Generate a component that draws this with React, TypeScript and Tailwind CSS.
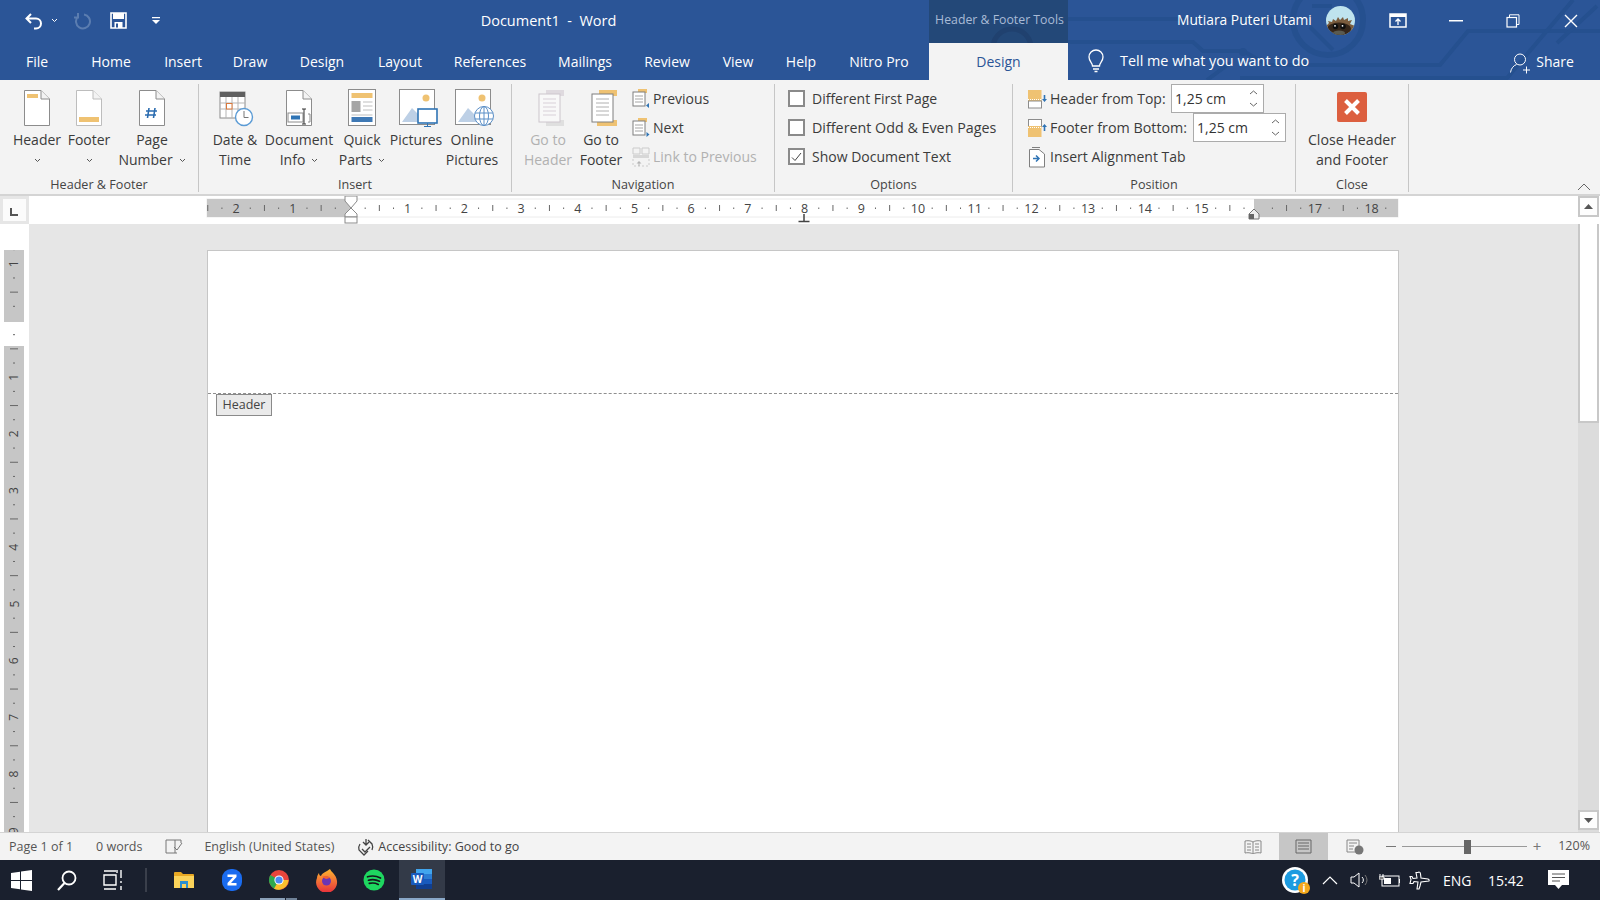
import React from "react";

const font = "font-['Open_Sans',sans-serif]";

function Doc({ children, stroke = "#8c8c8c" }: { children?: React.ReactNode; stroke?: string }) {
  return (
    <svg width="28" height="38" viewBox="0 0 28 38">
      <path d="M1.5 1.5H18L26.5 10V36.5H1.5Z" fill="#fff" stroke={stroke} />
      <path d="M18 1.5V10H26.5" fill="#f3f3f3" stroke={stroke} />
      {children}
    </svg>
  );
}

const HeaderIcon = () => <Doc><rect x="4" y="5" width="11" height="4" fill="#efc272" /></Doc>;
const FooterIcon = () => <Doc stroke="#bdbdbd"><rect x="4" y="28" width="20" height="5" fill="#efc272" /></Doc>;
const PageNumIcon = () => (
  <Doc>
    <path d="M11 19l-1.5 10M17 19l-1.5 10M8 22h11M7 26h11" stroke="#2b6cb0" strokeWidth="1.6" fill="none" />
  </Doc>
);
const DateIcon = () => (
  <svg width="36" height="38" viewBox="0 0 36 38" className="ml-[3px]">
    <rect x="1" y="3" width="25" height="26" fill="#fff" stroke="#8c8c8c" />
    <rect x="1" y="3" width="25" height="5" fill="#5f5f5f" />
    <path d="M1 14h25M1 20h25M7 8v21M13 8v21M19 8v21" stroke="#b5b5b5" />
    <rect x="7.5" y="14.5" width="5.5" height="5.5" fill="#fff" stroke="#d9783b" />
    <circle cx="25" cy="28" r="8.5" fill="#fff" stroke="#5b9bd5" strokeWidth="1.4" />
    <path d="M25 22v6.5h4.5" fill="none" stroke="#777" />
  </svg>
);
const DocInfoIcon = () => (
  <Doc>
    <rect x="3" y="24" width="15" height="9" fill="#fff" stroke="#8c8c8c" />
    <rect x="6" y="26.5" width="9" height="4" fill="#2f74b5" />
    <path d="M19 20v15M17 20h4M17 35h4" stroke="#333" fill="none" />
    <path d="M23 25h2v8h-2" stroke="#8c8c8c" fill="none" />
  </Doc>
);
const QuickIcon = () => (
  <svg width="28" height="38" viewBox="0 0 28 38">
    <rect x=".5" y=".5" width="27" height="36" fill="#fff" stroke="#8c8c8c" />
    <rect x="3.5" y="4" width="21" height="5" fill="#efc272" />
    <rect x="3.5" y="12" width="9" height="11" fill="#a6a6a6" />
    <path d="M15 13h9.5M15 17h9.5M15 21h9.5M3.5 26h21" stroke="#bfbfbf" />
    <rect x="3.5" y="28" width="21" height="5" fill="#3f79b5" />
  </svg>
);
const PicBase = () => (
  <>
    <rect x=".5" y=".5" width="35" height="35" fill="#fff" stroke="#8c8c8c" />
    <circle cx="27" cy="9" r="3.5" fill="#efc272" />
    <path d="M3 33l10-14 8 8 3-2v8Z" fill="#bdd0e6" />
  </>
);
const PicturesIcon = () => (
  <svg width="40" height="38" viewBox="0 0 40 38" className="ml-[5px]">
    <PicBase />
    <rect x="19" y="20" width="19" height="14" fill="#fff" stroke="#2f74b5" strokeWidth="1.6" />
    <path d="M28.5 34v3M25 37.5h7" stroke="#2f74b5" />
  </svg>
);
const OnlineIcon = () => (
  <svg width="40" height="38" viewBox="0 0 40 38" className="ml-[5px]">
    <PicBase />
    <circle cx="29" cy="27" r="9.5" fill="#fff" stroke="#5b8fc7" />
    <ellipse cx="29" cy="27" rx="4.5" ry="9.5" fill="none" stroke="#5b8fc7" />
    <path d="M20 24h18M20 30h18M29 17.500v19" stroke="#5b8fc7" />
  </svg>
);
const GoHeaderIcon = () => (
  <svg width="30" height="38" viewBox="0 0 30 38" opacity=".45" className="ml-[8px]">
    <rect x="9" y="1" width="18" height="6" fill="#c9bcc9" />
    <rect x="9" y="31" width="18" height="6" fill="#c9c9c9" />
    <rect x="2" y="5" width="21" height="28" fill="#fff" stroke="#a08fa0" />
    <path d="M6 10h13M6 14h13M6 18h13M6 22h13M6 26h13" stroke="#b9a9b9" />
  </svg>
);
const GoFooterIcon = () => (
  <svg width="30" height="38" viewBox="0 0 30 38" className="ml-[8px]">
    <rect x="9" y="1" width="18" height="6" fill="#efc272" />
    <rect x="7" y="31" width="20" height="6" fill="#efc272" />
    <rect x="2" y="5" width="21" height="28" fill="#fff" stroke="#7f7f7f" />
    <path d="M6 10h13M6 14h13M6 18h13M6 22h13M6 26h13" stroke="#b0b0b0" />
  </svg>
);
const SmallDoc = ({ dir }: { dir: "l" | "r" }) => (
  <svg width="18" height="20" viewBox="0 0 18 20">
    <rect x="6" y="0" width="9" height="4" fill="#efc272" />
    <rect x="1" y="3" width="12" height="14" fill="#fff" stroke="#7f7f7f" />
    <path d="M3 7h8M3 10h8M3 13h8" stroke="#a5a5a5" />
    {dir === "l" ? <path d="M17 14v5l-3-2.500Z" fill="#2f74b5" /> : <path d="M14.500 14v5l3-2.500Z" fill="#2f74b5" />}
  </svg>
);
const LinkIcon = () => (
  <svg width="18" height="20" viewBox="0 0 18 20" opacity=".5">
    <path d="M1 1h7v6H1ZM10 1h7v6h-7Z" fill="none" stroke="#a5a5a5" />
    <rect x="1" y="8" width="16" height="3" fill="#bcbcbc" />
    <path d="M1 12v7h16v-7" fill="none" stroke="#a5a5a5" strokeDasharray="2 2" />
    <path d="M7 14l-2.500 2.500h2V19h1v-2.500h2Z" fill="#777" />
  </svg>
);
const HdrDist = ({ up }: { up?: boolean }) => (
  <svg width="20" height="20" viewBox="0 0 20 20">
    {up ? (
      <>
        <rect x=".5" y="1.500" width="13" height="7" fill="#fff" stroke="#8c8c8c" />
        <rect x="0" y="8" width="13.500" height="11" fill="#efc272" />
        <path d="M0 9.500h13.500" stroke="#fff" strokeDasharray="1 1" />
        <path d="M16.500 6l-2.500 3h1.700v4h1.600V9h1.700Z" fill="#2f74b5" />
      </>
    ) : (
      <>
        <rect x="0" y="1" width="13.500" height="11" fill="#efc272" />
        <rect x=".5" y="12" width="13" height="7" fill="#fff" stroke="#8c8c8c" />
        <path d="M0 10.500h13.500" stroke="#fff" strokeDasharray="1 1" />
        <path d="M16.500 13l-2.500-3h1.700V6h1.600v4h1.700Z" fill="#2f74b5" />
      </>
    )}
  </svg>
);
const AlignIcon = () => (
  <svg width="18" height="22" viewBox="0 0 18 22">
    <path d="M1.500 3.500H11L16.500 8V21H1.500Z" fill="#fff" stroke="#7f7f7f" />
    <path d="M4 1.500H12" stroke="#7f7f7f" />
    <path d="M5 12.500h5M8 9.500l3 3-3 3" stroke="#2f74b5" strokeWidth="1.500" fill="none" />
  </svg>
);
const Caret = () => (
  <svg width="7" height="5" viewBox="0 0 7 5" className="inline-block"><path d="M1 1l2.500 2.500L6 1" fill="none" stroke="#555" /></svg>
);

function Big({ w, icon, lines, disabled, caret }: { w: string; icon: React.ReactNode; lines: string[]; disabled?: boolean; caret?: "below" | "inline" }) {
  return (
    <div className={`${w} flex flex-col items-center shrink-0`}>
      <div className="h-[38px] mt-[5px] flex items-center justify-center">{icon}</div>
      <div className={`mt-[3px] flex flex-col items-center text-[14px] leading-[20px] whitespace-nowrap ${disabled ? "text-[#b1b1b1]" : "text-[#3b3b3b]"}`}>
        {lines.map((l, i) => (
          <div key={i} className="flex items-center gap-[6px]">
            <span>{l}</span>
            {caret === "inline" && i === lines.length - 1 && <Caret />}
          </div>
        ))}
        {caret === "below" && <div className="h-[20px] flex items-center"><Caret /></div>}
      </div>
    </div>
  );
}

function Group({ cls, label, children }: { cls: string; label: string; children: React.ReactNode }) {
  return (
    <div className={`${cls} h-[108px] flex flex-col border-r border-[#c6c6c6] shrink-0`}>
      <div className="flex-1 flex">{children}</div>
      <div className="text-center text-[12.600px] leading-[14px] text-[#444] whitespace-nowrap">{label}</div>
    </div>
  );
}

const Row = ({ children, cls = "" }: { children: React.ReactNode; cls?: string }) => (
  <div className={`h-[29px] flex items-center whitespace-nowrap text-[14px] text-[#3b3b3b] ${cls}`}>{children}</div>
);

const Check = ({ on }: { on?: boolean }) => (
  <span className="w-[17px] h-[17px] bg-white border-2 border-[#8a8a8a] flex items-center justify-center shrink-0">
    {on && (
      <svg width="11" height="10" viewBox="0 0 11 10"><path d="M1 5.500l3 3 6-7.500" fill="none" stroke="#444" /></svg>
    )}
  </span>
);

function Spin({ cls }: { cls: string }) {
  return (
    <div className={`${cls} h-[29px] bg-white border border-[#ababab] flex items-center justify-between pl-[3px] pr-[5px] text-[14px] text-[#333]`}>
      <span>1,25 cm</span>
      <span className="flex flex-col gap-[7px]">
        <svg width="9" height="5" viewBox="0 0 9 5"><path d="M1 4l3.500-3L8 4" fill="none" stroke="#666" /></svg>
        <svg width="9" height="5" viewBox="0 0 9 5"><path d="M1 1l3.500 3L8 1" fill="none" stroke="#666" /></svg>
      </span>
    </div>
  );
}

function HRuler() {
  const cm = 56.7;
  const zero = 144;
  const ticks: React.ReactNode[] = [];
  for (let q = -10; q <= 73; q++) {
    const x = zero + (q * cm) / 4 - (q < 0 ? 1.5 : 0);
    if (q % 4 === 0) {
      const n = Math.abs(q / 4);
      if (n === 0 || n === 16) continue;
      ticks.push(
        <text key={q} x={x} y="14" textAnchor="middle" fontSize="12.500" fill="#444" fontFamily="'Open Sans',sans-serif">{n}</text>
      );
    } else if (q % 2 === 0) {
      ticks.push(<path key={q} d={`M${x} 6v6`} stroke="#666" />);
    } else {
      ticks.push(<path key={q} d={`M${x} 8.500v1.500`} stroke="#666" />);
    }
  }
  return (
    <svg width="1191" height="25" viewBox="0 0 1191 25" className="overflow-visible">
      <rect x="0" y="0" width="1191" height="18" fill="#fff" stroke="#ececec" />
      <rect x="0" y="0" width="144" height="18" fill="#c6c6c6" />
      <rect x="1047" y="0" width="144" height="18" fill="#c6c6c6" />
      {ticks}
      <path d="M138 -3h12v5l-6 7-6-7Z" fill="#fff" stroke="#8a8a8a" />
      <path d="M144 9l6 6v3h-12v-3Z" fill="#fff" stroke="#8a8a8a" />
      <rect x="138" y="18" width="12" height="6" fill="#fff" stroke="#8a8a8a" />
      <path d="M1047 10l5 5v5h-10v-5Z" fill="#eee" stroke="#777" />
      <path d="M1042 15h5v5h-5Z" fill="#666" />
      <path d="M597 15v7M591.500 22.500h11" stroke="#444" strokeWidth="1.500" />
    </svg>
  );
}

function VRuler() {
  const cm = 56.7;
  const zero = 70.5;
  const items: React.ReactNode[] = [];
  for (let q = -5; q <= 40; q++) {
    const y = zero + (q * cm) / 4;
    if (q === 0) continue;
    if (q % 4 === 0) {
      const n = Math.abs(q / 4);
      items.push(
        <text key={q} x="10" y={y} textAnchor="middle" dominantBaseline="central" fontSize="12" fill="#444" fontFamily="'Open Sans',sans-serif" transform={`rotate(-90 10 ${y})`}>{n}</text>
      );
    } else if (q % 2 === 0) {
      items.push(<path key={q} d={`M6 ${y}h8`} stroke="#666" />);
    } else {
      items.push(<path key={q} d={`M9 ${y}h2`} stroke="#666" />);
    }
  }
  return (
    <svg width="20" height="582" viewBox="0 0 20 582">
      <rect width="20" height="582" fill="#c6c6c6" />
      <rect y="72" width="20" height="24" fill="#fff" />
      {items}
    </svg>
  );
}

const Avatar = () => (
  <svg width="29" height="29" viewBox="0 0 29 29">
    <defs><clipPath id="av"><circle cx="14.500" cy="14.500" r="14.500" /></clipPath></defs>
    <g clipPath="url(#av)">
      <rect width="29" height="29" fill="#bfe3ee" />
      <path d="M0 20l3-3-1-2 4 1 1-3 3 2 2-4 2 3 3-3 1 3 4-2 0 3 4-1-2 4 5 2v14H0Z" fill="#7a5c3e" />
      <ellipse cx="13" cy="23" rx="12" ry="6.500" fill="#35261a" />
      <circle cx="9.500" cy="20.500" r="2.700" fill="#0d0d0d" />
      <circle cx="17" cy="20.500" r="2.700" fill="#0d0d0d" />
      <circle cx="9" cy="19.800" r=".9" fill="#fff" />
      <circle cx="16.500" cy="19.800" r=".9" fill="#fff" />
      <ellipse cx="13" cy="27" rx="6" ry="2.500" fill="#5a5a50" />
    </g>
  </svg>
);

function Circuit() {
  return (
    <svg className="absolute left-0 top-0 pointer-events-none" width="1600" height="80" viewBox="0 0 1600 80" fill="none" stroke="#25508f" strokeWidth="4">
      <circle cx="1328" cy="20" r="35" strokeWidth="6" />
      <path d="M1310 27l23 23M1312 6h20" />
      <path d="M1068 19H1293" />
      <path d="M1068 42H1193l10 9H1243l25 14H1440l28-34H1600" />
      <path d="M1230 63l-23 17" />
      <path d="M1240 78H1507L1573 0M1557 43l40-37" />
      <circle cx="1243" cy="52" r="4" fill="#25508f" stroke="none" />
    </svg>
  );
}

const ZoomApp = () => (
  <svg width="22" height="24" viewBox="0 0 22 24">
    <rect x="1" y="1" width="20" height="22" rx="9" fill="#1a6cf0" />
    <path d="M6.500 6.500h9v2.500l-5.500 6h5.500v2.500h-9V15l5.500-6h-5.500Z" fill="#fff" />
  </svg>
);
const Chrome = () => (
  <svg width="22" height="22" viewBox="0 0 22 22">
    <circle cx="11" cy="11" r="10" fill="#e8453c" />
    <path d="M11 11L2.300 6A10 10 0 0 0 6 19.700L11 21Z" fill="#2da94f" />
    <path d="M11 11h9.500A10 10 0 0 1 6 19.700Z" fill="#fbc02d" />
    <circle cx="11" cy="11" r="4.600" fill="#fff" />
    <circle cx="11" cy="11" r="3.600" fill="#4a8af4" />
  </svg>
);
const Firefox = () => (
  <svg width="22" height="24" viewBox="0 0 22 24">
    <defs>
      <linearGradient id="ff" x1="0" y1="0" x2="0" y2="1"><stop offset="0" stopColor="#fdb62f" /><stop offset="1" stopColor="#e8303c" /></linearGradient>
    </defs>
    <path d="M14 1c1 3 6 5 7 12a10.500 10.500 0 1 1-20-3c0-2 1-4 2-5 0 2 1 3 2 3 1-3 5-4 9-7Z" fill="url(#ff)" />
    <circle cx="10.500" cy="13" r="4.500" fill="#6b35b5" />
    <path d="M6 9c3-2 6-1 8 1l-4 1Z" fill="#f4622c" />
  </svg>
);
const Spotify = () => (
  <svg width="22" height="22" viewBox="0 0 22 22">
    <circle cx="11" cy="11" r="10.500" fill="#1ed760" />
    <path d="M4.500 7.800c4-1.200 9-.9 13 1.200M5.500 11.200c3.500-1 7.500-.7 11 1M6.300 14.400c3-.7 6-.5 9 1" stroke="#14161c" strokeWidth="1.700" fill="none" strokeLinecap="round" />
  </svg>
);
const WordIcon = () => (
  <svg width="24" height="22" viewBox="0 0 24 22">
    <rect x="6" y="1" width="16" height="5" fill="#41a5ee" />
    <rect x="6" y="6" width="16" height="5" fill="#2b7cd3" />
    <rect x="6" y="11" width="16" height="5" fill="#185abd" />
    <rect x="6" y="16" width="16" height="5" fill="#103f91" />
    <rect x="1" y="5" width="13" height="12" rx="1" fill="#185abd" />
    <text x="7.500" y="15" textAnchor="middle" fontSize="10" fontWeight="700" fill="#fff" fontFamily="'Open Sans',sans-serif">W</text>
  </svg>
);

export default function App() {
  return (
    <div className={`w-[1600px] h-[900px] flex flex-col overflow-hidden bg-white ${font}`}>
      {/* Top blue */}
      <div className="relative h-[80px] bg-[#2b5597] shrink-0 text-white">
        <Circuit />
        <div className="absolute left-[929px] top-0 w-[139px] h-[43px] bg-[#234878] overflow-hidden">
          <svg width="139" height="43" viewBox="0 0 139 43" fill="none" stroke="#20416f" strokeWidth="5"><circle cx="83" cy="48" r="19" /></svg>
        </div>
        <div className="relative h-[43px] pb-[2px] flex items-center">
          <div className="w-[24px]" />
          <svg width="20" height="18" viewBox="0 0 20 18"><path d="M7 2L2.500 6.500 7 11M3 6.500h9a5 5 0 0 1 0 10h-2" fill="none" stroke="#fff" strokeWidth="2" /></svg>
          <div className="ml-[7px]"><svg width="7" height="5" viewBox="0 0 7 5"><path d="M1 1l2.500 2.500L6 1" fill="none" stroke="#fff" /></svg></div>
          <div className="ml-[15px]"><svg width="18" height="18" viewBox="0 0 18 18"><path d="M11 2.500A7 7 0 1 1 5 4.500M5 1v4.500H1" fill="none" stroke="#5b7db0" strokeWidth="2" /></svg></div>
          <div className="ml-[19px]"><svg width="17" height="17" viewBox="0 0 17 17"><path d="M1 1h15v15H1Z" fill="none" stroke="#fff" strokeWidth="1.600" /><rect x="3" y="1" width="11" height="6" fill="#fff" /><rect x="4.500" y="10" width="8" height="6" fill="#fff" /><rect x="6" y="11.500" width="2" height="4" fill="#2b5597" /></svg></div>
          <div className="ml-[25px]"><svg width="8" height="7" viewBox="0 0 8 7"><path d="M0 0h8v1.300H0ZM0 3h8L4 7Z" fill="#fff" /></svg></div>
          <div className="w-[324px]" />
          <div className="w-[163px] text-center text-[14.500px] whitespace-pre ml-[-17px]">Document1  -  Word</div>
          <div className="w-[300px]" />
          <div className="w-[139px] text-center text-[12.300px] text-[#a9bbd6] whitespace-nowrap shrink-0">Header &amp; Footer Tools</div>
          <div className="w-[108px]" />
          <div className="w-[136px] text-[13.800px] whitespace-nowrap">Mutiara Puteri Utami</div>
          <div className="ml-[13px]"><Avatar /></div>
          <div className="ml-[34px]"><svg width="18" height="15" viewBox="0 0 18 15"><rect x="1" y="1" width="16" height="13" fill="none" stroke="#fff" strokeWidth="1.500" /><rect x="1" y="1" width="16" height="3" fill="#fff" /><path d="M9 12V6M6.500 8.500L9 6l2.500 2.500" stroke="#fff" fill="none" strokeWidth="1.300" /></svg></div>
          <div className="ml-[42px]"><svg width="14" height="2" viewBox="0 0 14 2"><rect width="14" height="1.500" fill="#fff" /></svg></div>
          <div className="ml-[43px]"><svg width="14" height="14" viewBox="0 0 14 14"><path d="M3.500 3V.8H13V10.500H10.500" fill="none" stroke="#fff" /><rect x="1" y="3.500" width="9.500" height="9.500" fill="none" stroke="#fff" strokeWidth="1.200" /></svg></div>
          <div className="ml-[44px]"><svg width="14" height="14" viewBox="0 0 14 14"><path d="M1 1l12 12M13 1L1 13" stroke="#fff" strokeWidth="1.400" /></svg></div>
        </div>
        <div className="relative h-[37px] flex text-[14px] whitespace-nowrap">
          <div className="w-[74px] flex items-center justify-center">File</div>
          <div className="w-[74px] flex items-center justify-center">Home</div>
          <div className="w-[70px] flex items-center justify-center">Insert</div>
          <div className="w-[64px] flex items-center justify-center">Draw</div>
          <div className="w-[80px] flex items-center justify-center">Design</div>
          <div className="w-[76px] flex items-center justify-center">Layout</div>
          <div className="w-[104px] flex items-center justify-center">References</div>
          <div className="w-[86px] flex items-center justify-center">Mailings</div>
          <div className="w-[78px] flex items-center justify-center">Review</div>
          <div className="w-[64px] flex items-center justify-center">View</div>
          <div className="w-[62px] flex items-center justify-center">Help</div>
          <div className="w-[94px] flex items-center justify-center">Nitro Pro</div>
          <div className="ml-[3px] w-[139px] bg-[#f3f3f3] text-[#2b5597] flex items-center justify-center">Design</div>
          <div className="ml-[18px] flex items-center pb-[2px]">
            <svg width="20" height="24" viewBox="0 0 20 24"><path d="M6.500 17c0-3-3.500-4.500-3.500-9a7 7 0 0 1 14 0c0 4.500-3.500 6-3.500 9ZM7 20h6M8.500 22.500h3" fill="none" stroke="#fff" strokeWidth="1.300" /></svg>
            <span className="ml-[14px] text-[14.400px]">Tell me what you want to do</span>
          </div>
          <div className="ml-[200px] flex items-center">
            <svg width="22" height="22" viewBox="0 0 22 22" className="mt-[3px]"><circle cx="11" cy="7.500" r="5.500" fill="none" stroke="#fff" /><path d="M1.500 20.500c.5-4 3-7 6-8M14 18h7M17.500 14.500v7" fill="none" stroke="#fff" /></svg>
            <span className="ml-[5px]">Share</span>
          </div>
        </div>
      </div>

      {/* Ribbon */}
      <div className="relative h-[116px] bg-[#f3f3f3] border-b-2 border-[#d4d4d4] shrink-0 flex items-start pt-[4px]">
        <Group cls="w-[199px]" label="Header & Footer">
          <div className="w-[7px]" />
          <Big w="w-[60px]" icon={<HeaderIcon />} lines={["Header"]} caret="below" />
          <Big w="w-[44px]" icon={<FooterIcon />} lines={["Footer"]} caret="below" />
          <div className="w-[5px]" />
          <Big w="w-[72px]" icon={<PageNumIcon />} lines={["Page", "Number"]} caret="inline" />
        </Group>
        <Group cls="w-[313px]" label="Insert">
          <div className="w-[7px]" />
          <Big w="w-[58px]" icon={<DateIcon />} lines={["Date &", "Time"]} />
          <Big w="w-[70px]" icon={<DocInfoIcon />} lines={["Document", "Info"]} caret="inline" />
          <Big w="w-[56px]" icon={<QuickIcon />} lines={["Quick", "Parts"]} caret="inline" />
          <Big w="w-[52px]" icon={<PicturesIcon />} lines={["Pictures"]} />
          <Big w="w-[60px]" icon={<OnlineIcon />} lines={["Online", "Pictures"]} />
        </Group>
        <Group cls="w-[263px]" label="Navigation">
          <div className="w-[10px]" />
          <Big w="w-[52px]" icon={<GoHeaderIcon />} lines={["Go to", "Header"]} disabled />
          <Big w="w-[54px]" icon={<GoFooterIcon />} lines={["Go to", "Footer"]} />
          <div className="ml-[4px] flex flex-col">
            <Row><span className="w-[21px]"><SmallDoc dir="l" /></span>Previous</Row>
            <Row><span className="w-[21px]"><SmallDoc dir="r" /></span>Next</Row>
            <Row cls="text-[#b1b1b1]"><span className="w-[21px]"><LinkIcon /></span>Link to Previous</Row>
          </div>
        </Group>
        <Group cls="w-[238px]" label="Options">
          <div className="ml-[13px] flex flex-col">
            <Row><Check /><span className="ml-[7px]">Different First Page</span></Row>
            <Row><Check /><span className="ml-[7px] text-[14.300px]">Different Odd &amp; Even Pages</span></Row>
            <Row><Check on /><span className="ml-[7px]">Show Document Text</span></Row>
          </div>
        </Group>
        <Group cls="w-[283px]" label="Position">
          <div className="ml-[15px] flex flex-col">
            <Row><span className="w-[22px]"><HdrDist /></span><span className="w-[121px]">Header from Top:</span><Spin cls="w-[93px]" /></Row>
            <Row><span className="w-[22px]"><HdrDist up /></span><span className="w-[143px] text-[14.300px]">Footer from Bottom:</span><Spin cls="w-[93px]" /></Row>
            <Row><span className="w-[22px]"><AlignIcon /></span>Insert Alignment Tab</Row>
          </div>
        </Group>
        <Group cls="w-[113px]" label="Close">
          <div className="w-full flex flex-col items-center">
            <div className="mt-[8px] w-[30px] h-[30px] rounded-[2px] bg-[#dc5f3f] flex items-center justify-center">
              <svg width="18" height="18" viewBox="0 0 18 18"><path d="M2.500 2.500l13 13M15.500 2.500l-13 13" stroke="#fff" strokeWidth="4" /></svg>
            </div>
            <div className="mt-[8px] text-center text-[14.200px] leading-[20px] text-[#3b3b3b] whitespace-nowrap">Close Header<br />and Footer</div>
          </div>
        </Group>
        <svg className="absolute left-[1577px] top-[103px]" width="14" height="8" viewBox="0 0 14 8"><path d="M1 7l6-6 6 6" fill="none" stroke="#666" /></svg>
      </div>

      {/* Ruler row */}
      <div className="h-[28px] bg-white shrink-0 flex">
        <div className="w-[29px] h-[28px] bg-[#e6e6e6] p-[3px] shrink-0">
          <div className="w-full h-full bg-[#fbfbfb] flex items-center justify-center pt-[4px] pr-[2px]">
            <svg width="8" height="8" viewBox="0 0 8 8"><path d="M1 0v7h7" fill="none" stroke="#555" strokeWidth="2" /></svg>
          </div>
        </div>
        <div className="ml-[178px] mt-[3px]"><HRuler /></div>
        <div className="ml-[180px] w-[21px] h-[21px] bg-[#fdfdfd] border-2 border-[#c8c8c8] flex items-center justify-center">
          <svg width="9" height="5" viewBox="0 0 9 5"><path d="M4.500 0L9 5H0Z" fill="#555" /></svg>
        </div>
      </div>

      {/* Document area */}
      <div className="flex-1 min-h-0 flex overflow-hidden">
        <div className="w-[29px] bg-white shrink-0 pl-[4px] pt-[26px]">
          <VRuler />
        </div>
        <div className="flex-1 bg-[#e6e6e6] pl-[178px] pt-[26px] overflow-hidden">
          <div className="relative w-[1192px] h-[700px] bg-white border-l border-t border-r border-[#c6c6c6]">
            <div className="mt-[142px] border-t border-dashed border-[#8f8f8f]" />
            <div className="ml-[8px] w-[56px] h-[22px] bg-[#eaeaea] border border-[#8a8a8a] text-[12.500px] text-[#444] flex items-center justify-center">Header</div>
          </div>
        </div>
        <div className="w-[22px] bg-white shrink-0">
          <div className="w-[21px] h-full bg-[#dcdcdc] flex flex-col">
            <div className="w-[21px] h-[199px] bg-white border-2 border-t-0 border-[#c8c8c8]" />
            <div className="flex-1" />
            <div className="mb-[2px] w-[21px] h-[20px] bg-[#fdfdfd] border-2 border-[#c8c8c8] flex items-center justify-center">
              <svg width="9" height="5" viewBox="0 0 9 5"><path d="M4.500 5L9 0H0Z" fill="#555" /></svg>
            </div>
          </div>
        </div>
      </div>

      {/* Status bar */}
      <div className="h-[28px] bg-[#f3f3f3] border-t border-[#d4d4d4] shrink-0 flex items-stretch text-[12.500px] text-[#555] whitespace-nowrap">
        <div className="ml-[9px] self-center mt-[2px]">Page 1 of 1</div>
        <div className="ml-[23px] self-center mt-[2px]">0 words</div>
        <div className="ml-[23px] self-center">
          <svg width="18" height="16" viewBox="0 0 18 16"><path d="M1 1h9v13H1ZM10 1h6v3M10 14h2" fill="none" stroke="#777" /><path d="M9 8l3 3 5-7" fill="none" stroke="#777" /></svg>
        </div>
        <div className="ml-[21px] self-center mt-[2px]">English (United States)</div>
        <div className="ml-[23px] self-center">
          <svg width="18" height="18" viewBox="0 0 18 18"><path d="M3 6A7 7 0 0 0 2 12l5 5 4-4M15 12a7 7 0 0 0 0-6L11 2" fill="none" stroke="#444" strokeWidth="1.300" /><path d="M9 1v5M6 4l3 3 3-3M5 11l3 3 5-5" fill="none" stroke="#444" strokeWidth="1.300" /></svg>
        </div>
        <div className="ml-[3px] self-center mt-[2px] text-[#444]">Accessibility: Good to go</div>
        <div className="flex-1" />
        <div className="self-center mr-[17px]">
          <svg width="18" height="14" viewBox="0 0 18 14"><path d="M9 2C7 .5 3 .5 1 1v12c2-.5 6-.5 8 1 2-1.500 6-1.500 8-1V1c-2-.5-6-.5-8 1ZM9 2v12M3 4h4M3 7h4M3 10h4M11 4h4M11 7h4M11 10h4" fill="none" stroke="#888" /></svg>
        </div>
        <div className="w-[49px] bg-[#c6c6c6] flex items-center justify-center">
          <svg width="17" height="15" viewBox="0 0 17 15"><path d="M1 1h15v13H1ZM3 4h11M3 7h11M3 10h11" fill="none" stroke="#666" /></svg>
        </div>
        <div className="self-center ml-[18px]">
          <svg width="18" height="16" viewBox="0 0 18 16"><path d="M1 1h12v12H1ZM3 4h8M3 7h5M3 10h4" fill="none" stroke="#888" /><circle cx="13" cy="11" r="4.500" fill="#777" /></svg>
        </div>
        <div className="self-center ml-[22px] w-[10px] h-px bg-[#777]" />
        <div className="self-center ml-[6px] w-[125px] h-px bg-[#999] flex items-center">
          <div className="ml-[62px] w-[7px] h-[14px] bg-[#666]" />
        </div>
        <div className="self-center ml-[6px] text-[15px] leading-none text-[#777]">+</div>
        <div className="self-center ml-[17px]">120%</div>
        <div className="w-[10px]" />
      </div>

      {/* Taskbar */}
      <div className="h-[40px] bg-[#1a202e] shrink-0 flex items-center text-white">
        <div className="ml-[11px]">
          <svg width="21" height="21" viewBox="0 0 21 21"><path d="M0 3l9-1.300V10H0ZM10 1.500L21 0v10H10ZM0 11h9v8.300L0 18ZM10 11h11v10l-11-1.500Z" fill="#fff" /></svg>
        </div>
        <div className="ml-[25px]">
          <svg width="20" height="21" viewBox="0 0 20 21"><circle cx="12" cy="8" r="6.500" fill="none" stroke="#fff" strokeWidth="1.800" /><path d="M7.500 13L1 20" stroke="#fff" strokeWidth="2.200" /></svg>
        </div>
        <div className="ml-[26px]">
          <svg width="20" height="20" viewBox="0 0 20 20"><path d="M1 1h12M1 19h12M14 0v3M1 5h12v10H1ZM18 0v8M18 11v2M18 16v4" fill="none" stroke="#fff" strokeWidth="1.400" /></svg>
        </div>
        <div className="ml-[22px] w-[2px] h-[24px] bg-[#3a3f4b]" />
        <div className="ml-[26px]">
          <svg width="22" height="20" viewBox="0 0 22 20"><path d="M1 3a1 1 0 0 1 1-1h6l2 2h10a1 1 0 0 1 1 1v2H1Z" fill="#e8a823" /><rect x="1" y="6" width="20" height="12" fill="#fbd35a" /><rect x="7" y="11" width="8" height="7" fill="#2a8fd0" /><rect x="9" y="14" width="4" height="4" fill="#fbd35a" /></svg>
        </div>
        <div className="ml-[26px]"><ZoomApp /></div>
        <div className="ml-[17px] relative h-[40px] w-[37px] flex items-center justify-center">
          <Chrome />
          <div className="absolute bottom-0 left-0 w-[25px] h-[2px] bg-[#8aa0b8]" />
          <div className="absolute bottom-0 left-[26px] w-[11px] h-[2px] bg-[#6f8298]" />
        </div>
        <div className="ml-[19px]"><Firefox /></div>
        <div className="ml-[25px]"><Spotify /></div>
        <div className="ml-[14px] w-[46px] h-[40px] bg-[#333a48] border-b-2 border-[#8aa8c8] flex items-center justify-center"><WordIcon /></div>
        <div className="flex-1" />
        <div className="relative">
          <svg width="30" height="30" viewBox="0 0 30 30">
            <circle cx="14" cy="15" r="13" fill="#fff" />
            <circle cx="14" cy="15" r="10.500" fill="#1d9be0" />
            <text x="14" y="21" textAnchor="middle" fontSize="16" fontWeight="700" fill="#fff" fontFamily="'Open Sans',sans-serif">?</text>
            <circle cx="23" cy="23" r="6" fill="#f5a81c" />
            <text x="23" y="27" textAnchor="middle" fontSize="10" fontWeight="700" fill="#fff" fontFamily="'Open Sans',sans-serif">i</text>
          </svg>
        </div>
        <div className="ml-[11px]"><svg width="16" height="9" viewBox="0 0 16 9"><path d="M1 8l7-7 7 7" fill="none" stroke="#fff" strokeWidth="1.200" /></svg></div>
        <div className="ml-[12px]"><svg width="20" height="16" viewBox="0 0 20 16"><path d="M1 5h3l5-4v14l-5-4H1Z" fill="none" stroke="#fff" /><path d="M12 5a4 4 0 0 1 0 6" fill="none" stroke="#fff" /><path d="M15 3a8 8 0 0 1 0 10" fill="none" stroke="#777" /></svg></div>
        <div className="ml-[9px]"><svg width="22" height="14" viewBox="0 0 22 14"><rect x="3" y="3" width="17" height="10" fill="none" stroke="#fff" /><rect x="5" y="5" width="7" height="6" fill="#fff" /><path d="M20.500 6v4" stroke="#fff" /><path d="M1 1v3M4 1v3M0 4h5v2H0Z" stroke="#fff" /></svg></div>
        <div className="ml-[8px]"><svg width="21" height="19" viewBox="0 0 21 19"><path d="M10 1c1 0 1.500 1 1.500 2l.5 4 7 1c1 .5 1.500 1 1 2l-8 1-1 4-1 3h-2l1-7-4-.5-1 2H1l1-4-1-3h2l1 2 4-.5-1-5.500h2Z" fill="none" stroke="#fff" strokeWidth="1.100" /></svg></div>
        <div className="ml-[13px] text-[14px] w-[38px]">ENG</div>
        <div className="ml-[7px] text-[14px] w-[38px]">15:42</div>
        <div className="ml-[22px]"><svg width="21" height="20" viewBox="0 0 21 20"><path d="M0 0h21v15h-7l-3.500 4L7 15H0Z" fill="#fff" /><path d="M4 4h13M4 7.500h13M4 11h8" stroke="#555" /></svg></div>
        <div className="w-[31px]" />
      </div>
    </div>
  );
}
